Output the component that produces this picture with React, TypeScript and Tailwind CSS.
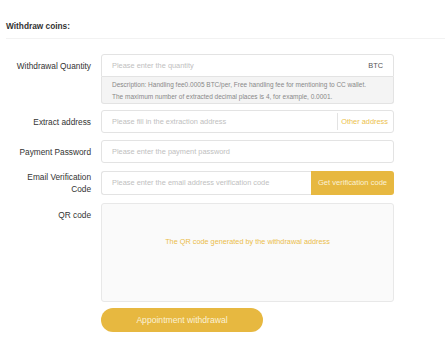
import React from 'react';

const font = { fontFamily: '"Liberation Sans", Arial, sans-serif' };

function Label({ children }: { children: React.ReactNode }) {
    return (
        <div className="w-[80px] ml-[11px] min-h-[23px] flex items-center justify-end text-right text-[8.3px] leading-[12px] text-[#333]">
            {children}
        </div>
    );
}

export default function App() {
    return (
        <div className="w-[445px] h-[361px] bg-white overflow-hidden" style={font}>
            {/* Header */}
            <div className="ml-[6px] pt-[20px] pb-[6px] border-b border-[#f2f2f2]">
                <h1 className="text-[8.3px] leading-[12px] font-bold text-[#333]">Withdraw coins:</h1>
            </div>

            <div className="mt-[15px]">
                {/* Withdrawal quantity */}
                <div className="flex items-start">
                    <Label>Withdrawal Quantity</Label>
                    <div className="ml-[10px] w-[293px]">
                        <div className="h-[23px] border border-[#e3e3e3] rounded-t-[3px] flex items-center px-[10px]">
                            <span className="flex-1 text-[7.4px] text-[#c0c0c0]">Please enter the quantity</span>
                            <span className="text-[7.4px] text-[#555]">BTC</span>
                        </div>
                        <div className="h-[27px] border border-t-0 border-[#e3e3e3] bg-[#f4f4f4] rounded-b-[3px] px-[10px] pt-[2px] text-[6.5px] leading-[12px] text-[#888]">
                            <p>Description: Handling fee0.0005 BTC/per, Free handling fee for mentioning to CC wallet.</p>
                            <p>The maximum number of extracted decimal places is 4, for example, 0.0001.</p>
                        </div>
                    </div>
                </div>

                {/* Extract address */}
                <div className="flex items-start mt-[6px]">
                    <Label>Extract address</Label>
                    <div className="ml-[10px] w-[293px] h-[23px] border border-[#e3e3e3] rounded-[3px] flex items-center pl-[10px]">
                        <span className="flex-1 text-[7.4px] text-[#c0c0c0]">Please fill in the extraction address</span>
                        <span className="h-[17px] border-l border-[#e3e3e3]" />
                        <span className="px-[3px] pr-[5px] text-[7.4px] text-[#ecbf4c]">Other address</span>
                    </div>
                </div>

                {/* Payment password */}
                <div className="flex items-start mt-[7px]">
                    <Label>Payment Password</Label>
                    <div className="ml-[10px] w-[293px] h-[23px] border border-[#e3e3e3] rounded-[3px] flex items-center px-[10px]">
                        <span className="text-[7.4px] text-[#c0c0c0]">Please enter the payment password</span>
                    </div>
                </div>

                {/* Email code */}
                <div className="flex items-center mt-[8px]">
                    <Label>Email Verification Code</Label>
                    <div className="ml-[10px] w-[293px] h-[24px] flex">
                        <div className="flex-1 border border-r-0 border-[#e3e3e3] rounded-l-[3px] flex items-center px-[10px]">
                            <span className="text-[7.4px] text-[#c0c0c0]">Please enter the email address verification code</span>
                        </div>
                        <button className="w-[83px] bg-[#e7b840] rounded-r-[3px] text-[7.6px] text-[#fbf1d6]">
                            Get verification code
                        </button>
                    </div>
                </div>

                {/* QR code */}
                <div className="flex items-start mt-[8px]">
                    <Label>QR code</Label>
                    <div className="ml-[10px] w-[293px] h-[99px] border border-[#e8e8e8] bg-[#fafafa] rounded-[3px] pt-[32px] text-center text-[7.3px] leading-[12px] text-[#ebbd4a]">
                        The QR code generated by the withdrawal address
                    </div>
                </div>

                {/* Submit */}
                <div className="flex mt-[6px]">
                    <div className="w-[80px] ml-[11px]" />
                    <button className="ml-[10px] w-[162px] h-[24px] rounded-full bg-[#e7b840] text-[8.6px] text-[#fbf1d6]">
                        Appointment withdrawal
                    </button>
                </div>
            </div>
        </div>
    );
}
